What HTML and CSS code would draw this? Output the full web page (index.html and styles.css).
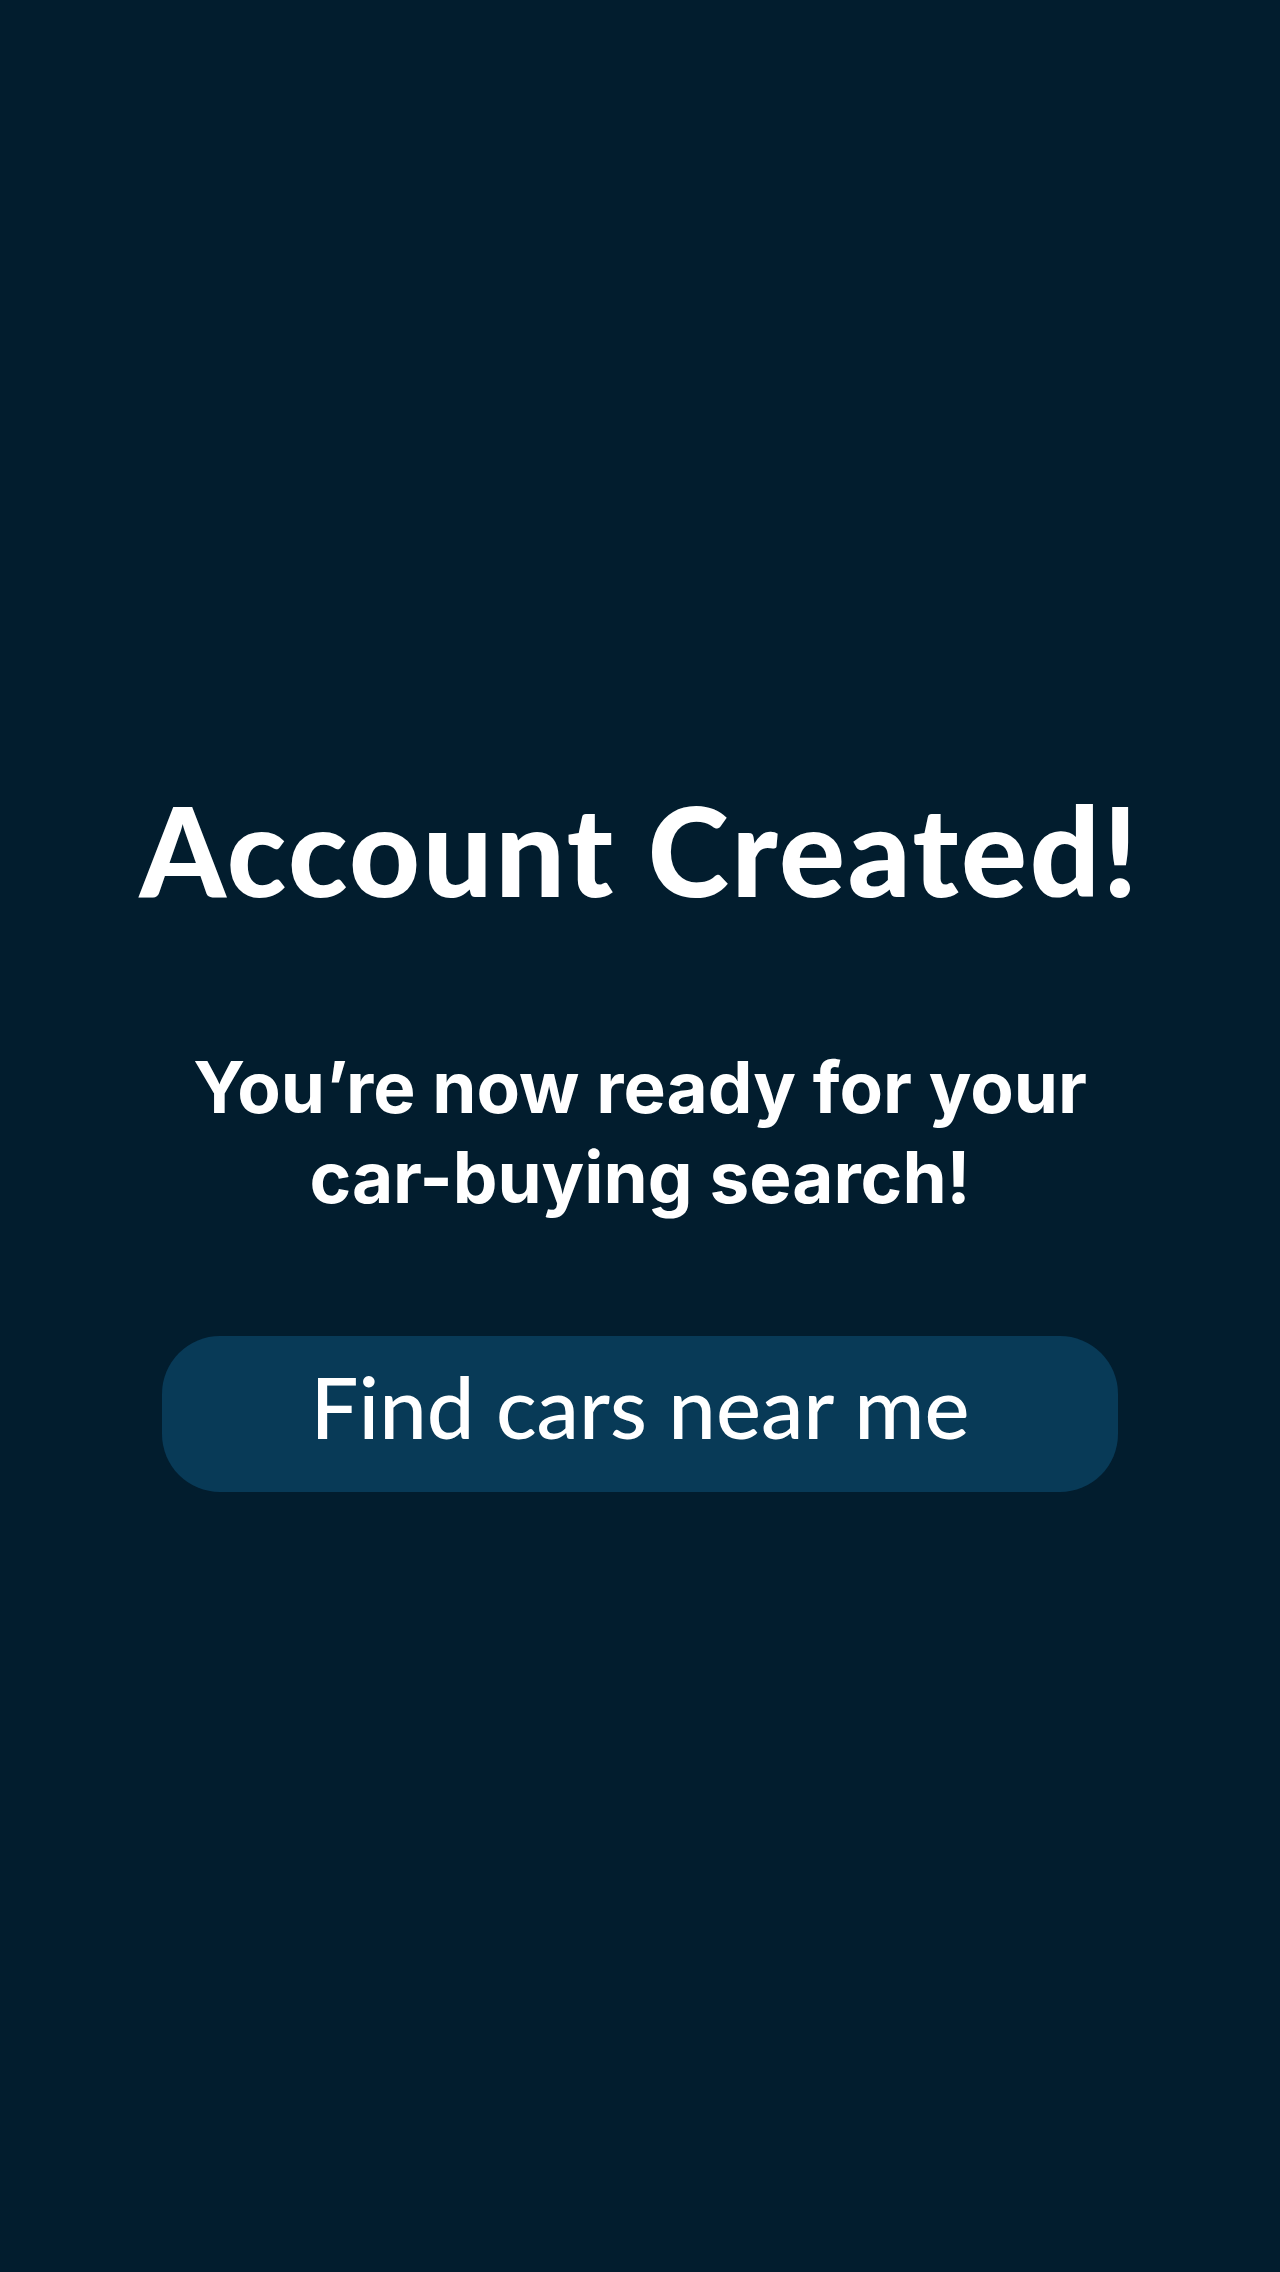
FILE: index.html
```html
<!DOCTYPE html>
<html>
<head>
<meta charset="utf-8">
<link rel="stylesheet" href="styles.css">
</head>
<body>
<main class="screen">
  <h1 class="title">Account Created!</h1>
  <p class="subtitle">You’re now ready for your<br>car-buying search!</p>
  <button class="cta">Find cars near me</button>
</main>
</body>
</html>
```
FILE: styles.css
```css
html, body {
  margin: 0;
  padding: 0;
  background: #021d2e;
}
.screen {
  width: 1280px;
  height: 2272px;
  box-sizing: border-box;
  padding-top: 780px;
  display: flex;
  flex-direction: column;
  align-items: center;
  color: #ffffff;
}
.title {
  margin: 0;
  font-family: "Lato", sans-serif;
  font-weight: 900;
  font-size: 123px;
  line-height: 140px;
  letter-spacing: 2.7px;
}
.subtitle {
  margin: 122px 0 0;
  font-family: "Inter", sans-serif;
  font-weight: 700;
  font-size: 71px;
  line-height: 90px;
  text-align: center;
}
.cta {
  margin-top: 114px;
  width: 956px;
  height: 156px;
  border: none;
  border-radius: 58px;
  background: #083a57;
  color: #ffffff;
  font-family: "Lato", sans-serif;
  font-weight: 500;
  font-size: 85px;
  line-height: 1;
  padding: 0 0 16px;
}
```
